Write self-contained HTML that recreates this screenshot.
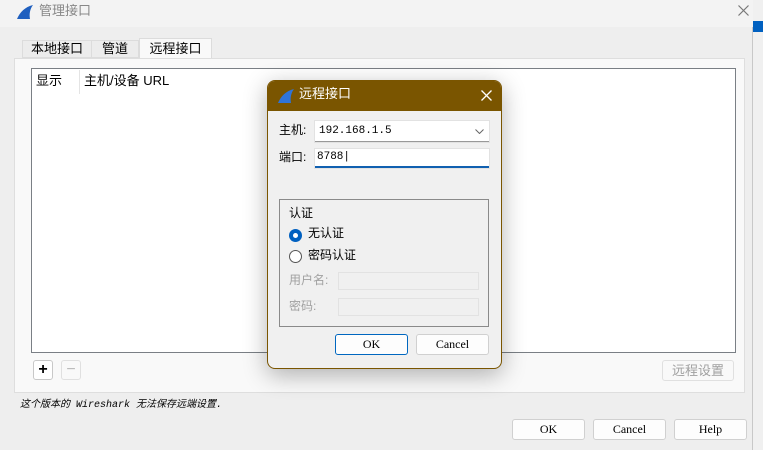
<!DOCTYPE html>
<html><head><meta charset="utf-8"><style>
*{box-sizing:border-box;margin:0;padding:0}
body{width:763px;height:450px;background:#f0f0f0;position:relative;overflow:hidden;font-family:"Liberation Sans","Noto Sans CJK SC",sans-serif;font-size:12px;color:#000;line-height:1.2}
.a{position:absolute}
.mono{font-family:"Liberation Mono","Noto Sans CJK SC",monospace}
.btn{position:absolute;background:#fdfdfd;border:1px solid #d0d0d0;border-radius:3px;text-align:center;font-family:"Liberation Serif","Noto Serif CJK SC",serif;font-size:12px;line-height:19px}
.gray{color:#a0a0a0}
</style></head><body>
<div class="a" style="left:0;top:0;width:753px;height:450px;background:#eeeeee;border-right:1px solid #c8c8c8"></div>
<div class="a" style="left:0;top:0;width:753px;height:27px;background:#f3f3f3"></div>
<svg class="a" style="left:16px;top:4px" width="18" height="16" viewBox="0 0 18 16"><path d="M1 15 C4 8 9 3 17 1 C14 5 13 10 14 15 Z" fill="#1f5fbf"/></svg>
<div class="a" style="left:39px;top:3px;font-size:13px;color:#888">管理接口</div>
<svg class="a" style="left:738px;top:5px" width="11" height="11"><path d="M0.5 0.5L10.5 10.5M10.5 0.5L0.5 10.5" stroke="#777" stroke-width="1.2"/></svg>
<div class="a" style="left:753px;top:0;width:10px;height:450px;background:#f0f0f0"></div>
<div class="a" style="left:753px;top:21px;width:10px;height:11px;background:#0060c0"></div>
<div class="a" style="left:22px;top:40px;width:70px;height:18px;border:1px solid #dcdcdc;background:#ececec;font-size:13px;text-align:center;line-height:16px">本地接口</div>
<div class="a" style="left:91px;top:40px;width:48px;height:18px;border:1px solid #dcdcdc;background:#ececec;font-size:13px;text-align:center;line-height:16px">管道</div>
<div class="a" style="left:139px;top:38px;width:73px;height:21px;border:1px solid #dcdcdc;border-bottom:none;background:#f9f9f9;font-size:13px;text-align:center;line-height:20px">远程接口</div>
<div class="a" style="left:14px;top:58px;width:731px;background:#f9f9f9;border:1px solid #dedede;height:335px"></div>
<div class="a" style="left:31px;top:68px;width:705px;height:285px;background:#fff;border:1px solid #7a7f85"></div>
<div class="a" style="left:36px;top:73px;font-size:13px">显示</div>
<div class="a" style="left:79px;top:70px;width:1px;height:24px;background:#e4e4e4"></div>
<div class="a" style="left:84px;top:73px;font-size:13px">主机/设备 URL</div>
<div class="a" style="left:33px;top:360px;width:20px;height:20px;border:1px solid #c8c8c8;border-radius:3px;background:#fff;text-align:center;line-height:17px;font-size:16px;font-weight:bold">+</div>
<div class="a" style="left:61px;top:360px;width:20px;height:20px;border:1px solid #e0e0e0;border-radius:3px;background:#f9f9f9;text-align:center;line-height:17px;font-size:16px;color:#bbb">−</div>
<div class="a" style="left:662px;top:360px;width:72px;height:21px;border:1px solid #e0e0e0;border-radius:3px;background:#f9f9f9;text-align:center;line-height:19px;font-size:13px;color:#a0a0a0">远程设置</div>
<div class="a mono" style="left:20px;top:400px;font-size:10px;font-style:italic">这个版本的 Wireshark 无法保存远端设置.</div>
<div class="btn" style="left:512px;top:419px;width:73px;height:21px">OK</div>
<div class="btn" style="left:593px;top:419px;width:73px;height:21px">Cancel</div>
<div class="btn" style="left:674px;top:419px;width:73px;height:21px">Help</div>
<div class="a" style="left:267px;top:80px;width:235px;height:289px;background:#f0f0f0;border:1px solid #7a5500;border-radius:8px;box-shadow:0 6px 24px rgba(0,0,0,.3);overflow:hidden">
<div style="height:30px;background:#7a5500;position:relative">
<svg class="a" style="left:9px;top:7px" width="18" height="16" viewBox="0 0 18 16"><path d="M1 15 C4 8 9 3 17 1 C14 5 13 10 14 15 Z" fill="#2f74d8"/></svg>
<div class="a" style="left:31px;top:5px;color:#fff;font-size:13px">远程接口</div>
<svg class="a" style="left:213px;top:9px" width="11" height="11"><path d="M0.5 0.5L10.5 10.5M10.5 0.5L0.5 10.5" stroke="#fff" stroke-width="1.3"/></svg>
</div>
</div>
<div class="a" style="left:279px;top:123px;font-size:12px">主机:</div>
<div class="a mono" style="left:315px;top:121px;width:174px;height:21px;background:#fff;border-bottom:1px solid #999;font-size:11px;padding:4px 0 0 4px;box-shadow:0 0 0 1px #e2e2e2">192.168.1.5<svg class="a" style="right:5px;top:8px" width="9" height="5"><path d="M0.5 0.5L4.5 4.5L8.5 0.5" stroke="#666" fill="none"/></svg></div>
<div class="a" style="left:279px;top:150px;font-size:12px">端口:</div>
<div class="a mono" style="left:315px;top:149px;width:174px;height:19px;background:#fff;border-bottom:2px solid #1060b0;font-size:11px;padding:2px 0 0 2px;box-shadow:0 0 0 1px #e2e2e2">8788|</div>
<div class="a" style="left:279px;top:199px;width:210px;height:128px;border:1px solid #8a8a8a"></div>
<div class="a" style="left:289px;top:206px;font-size:12px">认证</div>
<div class="a" style="left:289px;top:229px;width:13px;height:13px;border-radius:50%;background:#0060c0"><div style="position:absolute;left:4px;top:4px;width:5px;height:5px;border-radius:50%;background:#fff"></div></div>
<div class="a" style="left:308px;top:226px;font-size:12px">无认证</div>
<div class="a" style="left:289px;top:250px;width:13px;height:13px;border-radius:50%;border:1px solid #555;background:#fff"></div>
<div class="a" style="left:308px;top:248px;font-size:12px">密码认证</div>
<div class="a gray" style="left:289px;top:273px">用户名:</div>
<div class="a" style="left:338px;top:272px;width:141px;height:18px;border:1px solid #e2e2e2;background:#f0f0f0"></div>
<div class="a gray" style="left:289px;top:299px">密码:</div>
<div class="a" style="left:338px;top:298px;width:141px;height:18px;border:1px solid #e2e2e2;background:#f0f0f0"></div>
<div class="btn" style="left:335px;top:334px;width:73px;height:21px;border-color:#0067c0">OK</div>
<div class="btn" style="left:416px;top:334px;width:73px;height:21px">Cancel</div>
</body></html>
